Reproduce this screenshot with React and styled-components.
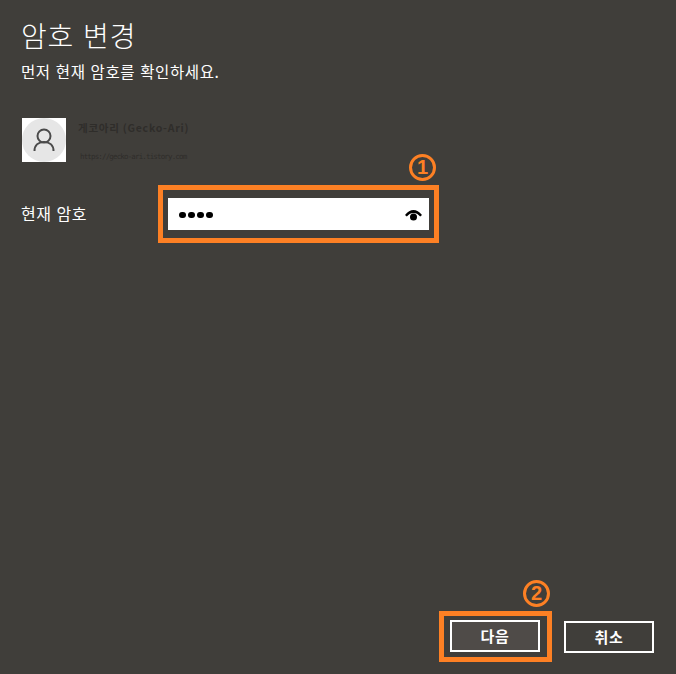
import React from "react";
import styled, { createGlobalStyle } from "styled-components";

const Global = createGlobalStyle`
  html, body { margin: 0; padding: 0; background: #403e3a; }
  * { box-sizing: border-box; }
`;
const KR = `"Noto Sans CJK KR", "Noto Sans", sans-serif`;
const ORANGE = "#fd8024";

const Page = styled.div`
  width: 676px; height: 674px; background: #403e3a; color: #fff;
  font-family: ${KR}; display: flex; flex-direction: column; overflow: hidden;
`;
const Header = styled.header`
  padding: 16px 0 0 21px; display: flex; flex-direction: column; gap: 7px;
`;
const Title = styled.h1`
  margin: 0; font-size: 28px; line-height: 38px; font-weight: 300; letter-spacing: 0.8px; word-spacing: 2px;
`;
const Subtitle = styled.p`
  margin: 0; font-size: 15.5px; line-height: 20px; font-weight: 400; letter-spacing: 0.6px; word-spacing: 1px;
`;
const Account = styled.div`
  margin: 37px 0 0 22px; display: flex; gap: 12px; height: 44px;
`;
const Avatar = styled.div`
  width: 44px; height: 44px; background: #fff; flex: none;
`;
const AccountText = styled.div`
  display: flex; flex-direction: column; color: #2f2d2a;
`;
const AccountName = styled.span`
  font: 700 10.5px/20px "Noto Sans CJK KR", "DejaVu Sans Mono", monospace; letter-spacing: 0.75px;
`;
const AccountUrl = styled.span`
  font: 400 7.5px/12px "DejaVu Sans Mono", monospace; margin-top: 13px; margin-left: 2px; letter-spacing: -0.85px;
`;
const FieldRow = styled.div`
  margin: 23px 0 0 21px; display: flex; align-items: center;
`;
const FieldLabel = styled.label`
  width: 137px; font-size: 16px; line-height: 20px; letter-spacing: 0.5px; word-spacing: 1px; margin-top: -2px;
`;
const Frame = styled.div`
  position: relative; border: 5px solid ${ORANGE}; padding: ${(p) => p.$pad};
  flex: none;
`;
const Badge = styled.span`
  position: absolute; width: 27px; height: 27px; border-radius: 50%; border: 3px solid ${ORANGE};
  color: ${ORANGE}; font: 700 20px/21px "Liberation Sans Narrow", "Liberation Sans", sans-serif; text-align: center;
  right: ${(p) => p.$right}px; top: -36px;
`;
const Input = styled.div`
  width: 261px; height: 32px; background: #fff; display: flex; align-items: center;
  justify-content: space-between; padding: 2px 7px 0 11px;
`;
const Dots = styled.div`
  display: flex; gap: 2.500px;
`;
const Dot = styled.i`
  width: 6.500px; height: 6.500px; border-radius: 50%; background: #000; display: block;
`;
const Footer = styled.footer`
  margin-top: auto; padding: 0 22px 12px 0; display: flex; justify-content: flex-end; align-items: center; gap: 12px;
`;
const Button = styled.button`
  width: 90px; height: 32px; border: 2px solid #fff; border-radius: 0; color: #fff;
  background: ${(p) => (p.$primary ? "#4f4b48" : "transparent")};
  font: 700 15px/20px ${KR}; letter-spacing: 0.6px; padding: 0; display: block;
`;

function AvatarIcon() {
  return (
    <svg width="44" height="44" viewBox="0 0 44 44">
      <circle cx="22" cy="22" r="22" fill="#e6e6e6" />
      <circle cx="22" cy="18" r="6.5" fill="none" stroke="#4a4a4a" strokeWidth="2" />
      <path d="M12.5 33c0-6 4-9 9.500-9s9.500 3 9.500 9" fill="none" stroke="#4a4a4a" strokeWidth="2" />
    </svg>
  );
}

function EyeIcon() {
  return (
    <svg width="17" height="11" viewBox="0 0 17 11">
      <path d="M0 5C2.800 1.800 5.500 0 8.500 0s5.700 1.800 8.500 5l-1.800 1.400C13 4.200 11 3 8.500 3S4 4.200 1.800 6.400z" fill="#000" />
      <circle cx="8.500" cy="7" r="3.500" fill="#000" />
    </svg>
  );
}

export default function App() {
  return (
    <Page>
      <Global />
      <Header>
        <Title>암호 변경</Title>
        <Subtitle>먼저 현재 암호를 확인하세요.</Subtitle>
      </Header>
      <Account>
        <Avatar><AvatarIcon /></Avatar>
        <AccountText>
          <AccountName>게코아리 (Gecko-Ari)</AccountName>
          <AccountUrl>https://gecko-ari.tistory.com</AccountUrl>
        </AccountText>
      </Account>
      <FieldRow>
        <FieldLabel>현재 암호</FieldLabel>
        <Frame $pad="8px 5px">
          <Badge $right={-2}>1</Badge>
          <Input>
            <Dots><Dot /><Dot /><Dot /><Dot /></Dots>
            <EyeIcon />
          </Input>
        </Frame>
      </FieldRow>
      <Footer>
        <Frame $pad="4px 7px 5px 6px">
          <Badge $right={-3}>2</Badge>
          <Button $primary>다음</Button>
        </Frame>
        <Button>취소</Button>
      </Footer>
    </Page>
  );
}
